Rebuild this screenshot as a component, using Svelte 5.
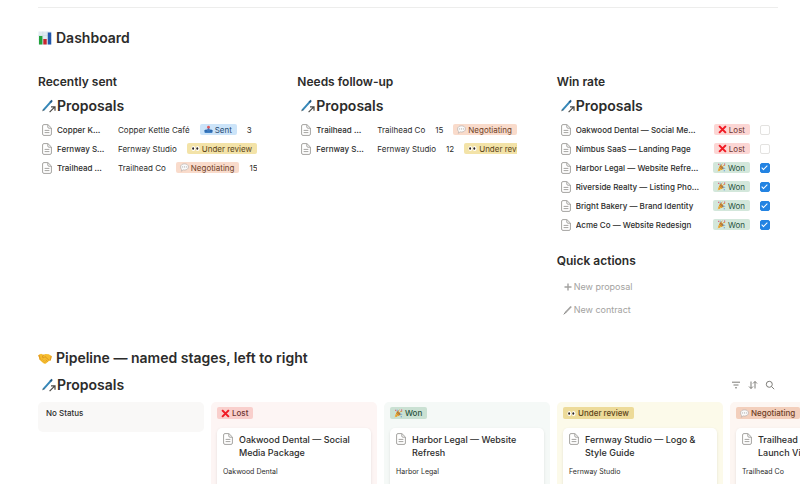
<script lang="ts">
  type Status = {
    label: string,
    icon: string,
    tone: string
  };

  const statuses: Record<string, Status> = {
    sent: { label: "Sent", icon: "tray", tone: "blue" },
    review: { label: "Under review", icon: "eyes", tone: "yellow" },
    negotiating: { label: "Negotiating", icon: "speech", tone: "orange" },
    lost: { label: "Lost", icon: "cross", tone: "red" },
    won: { label: "Won", icon: "party", tone: "green" }
  };

  const recent = [
    { title: "Copper K…", client: "Copper Kettle Café", status: "sent", days: 3 },
    { title: "Fernway S…", client: "Fernway Studio", status: "review", days: null },
    { title: "Trailhead …", client: "Trailhead Co", status: "negotiating", days: 15 }
  ];

  const followUps = [
    { title: "Trailhead …", client: "Trailhead Co", days: 15, status: "negotiating" },
    { title: "Fernway S…", client: "Fernway Studio", days: 12, status: "review" }
  ];

  let results = $state([
    { title: "Oakwood Dental — Social Me…", status: "lost", won: false },
    { title: "Nimbus SaaS — Landing Page", status: "lost", won: false },
    { title: "Harbor Legal — Website Refre…", status: "won", won: true },
    { title: "Riverside Realty — Listing Pho…", status: "won", won: true },
    { title: "Bright Bakery — Brand Identity", status: "won", won: true },
    { title: "Acme Co — Website Redesign", status: "won", won: true }
  ]);

  const lanes = [
    { status: "lost", title: "Oakwood Dental — Social Media Package", client: "Oakwood Dental" },
    { status: "won", title: "Harbor Legal — Website Refresh", client: "Harbor Legal" },
    { status: "review", title: "Fernway Studio — Logo & Style Guide", client: "Fernway Studio" },
    { status: "negotiating", title: "Trailhead Co — Product Launch Video", client: "Trailhead Co" }
  ];
</script>

{#snippet docIcon()}
  <svg class="doc" viewBox="0 0 10 12" aria-hidden="true">
    <path d="M2 .6h3.900L9.400 4v6a1.400 1.400 0 0 1-1.400 1.400H2A1.400 1.400 0 0 1 .6 10V2A1.400 1.400 0 0 1 2 .6z" />
    <path d="M5.800 .8V3a1.200 1.200 0 0 0 1.200 1.200h2.200M2.600 6.400h4.800M2.600 8.600h4.800" />
  </svg>
{/snippet}

{#snippet emoji(name: string)}
  <svg class="emoji" viewBox="0 0 16 16" aria-hidden="true">
    {#if name === "tray"}
      <path d="M1 9.500 3 8h10l2 1.500v3.500a1 1 0 0 1-1 1H2a1 1 0 0 1-1-1z" fill="#3f7fc4" />
      <path d="M1 9.500h4l1 1.500h4l1-1.500h4v2H1z" fill="#2560a5" />
      <path d="M8 10 4.800 6.500H7V4h2v2.500h2.200z" fill="#4a6fb5" />
      <circle cx="8" cy="3.800" r="2.500" fill="#e0595c" />
    {:else if name === "eyes"}
      <ellipse cx="4.200" cy="8" rx="3.400" ry="4.600" fill="#fff" />
      <ellipse cx="11.800" cy="8" rx="3.400" ry="4.600" fill="#fff" />
      <ellipse cx="3.800" cy="8" rx="1.700" ry="2.400" fill="#2b211d" />
      <ellipse cx="11.200" cy="8" rx="1.700" ry="2.400" fill="#2b211d" />
    {:else if name === "speech"}
      <path d="M8 1.500c4 0 7 2.300 7 5.500s-3 5.500-7 5.500c-.8 0-1.500-.1-2.200-.3-.9 1.300-2.200 2-3.800 2.300.7-.9 1-2 .9-3C1.700 10.400 1 8.800 1 7c0-3.200 3-5.500 7-5.500z" fill="#fafafa" stroke="#a9a3a0" stroke-width="1" />
      <path d="M4 7h1.500M7.200 7h1.500M10.500 7H12" stroke="#8e8987" stroke-width="1.500" />
    {:else if name === "cross"}
      <path d="M2 2 14 14M14 2 2 14" stroke="#f01923" stroke-width="3.600" />
    {:else if name === "party"}
      <path d="M1 15 5 4.500l6.500 6z" fill="#f2b53c" />
      <path d="m3.800 7.500 4.700 4.300M2.600 10.800l2.800 2.500" stroke="#c17a25" stroke-width="1.300" />
      <ellipse cx="8.300" cy="7.500" rx="1.800" ry="4.500" transform="rotate(-47 8.300 7.500)" fill="#a8733c" />
      <path d="M8 7.500C7 4 8 2.500 9.500 1.500M9 8c1-3 2.500-4 5.500-3.500" fill="none" stroke="#d98b33" stroke-width="1.400" />
      <path d="M10 9.500c2-1 3.500-.5 4.500 1" fill="none" stroke="#5798d8" stroke-width="1.400" />
      <path d="M2 1.500h2v2H2zM12.500 1h2v2h-2z" fill="#dc5a78" />
      <path d="M5 1.500h1.500V3H5zM12 13h2v1.500h-2z" fill="#5798d8" />
    {/if}
  </svg>
{/snippet}

{#snippet tag(key: string)}
  <span class="tag {statuses[key].tone}">
    {@render emoji(statuses[key].icon)}
    {statuses[key].label}
  </span>
{/snippet}

{#snippet sourceTitle()}
  <h3 class="source">
    <svg viewBox="0 0 14 14" aria-hidden="true">
      <path d="M1.200 11.300 9 2.600" stroke="#3587b8" stroke-width="2" />
      <path d="m8.300 3.400 1.800-2" stroke="#245b86" stroke-width="2" />
      <path d="m.4 12.200 1.500-1.700" stroke="#55585a" stroke-width="1" />
      <path d="m7.600 13.200 5-5M9 7.800h4v4" fill="none" stroke="#4a4946" stroke-width="1.200" />
    </svg>
    <a href="#proposals">Proposals</a>
  </h3>
{/snippet}

<main class="page">
  <hr />

  <h1 class="heading">
    <svg viewBox="0 0 14 14" aria-hidden="true">
      <rect x=".5" y=".5" width="13" height="13" fill="#e0ebf1" />
      <path d="M.5 4.500h13M.5 8.500h13M4.800.5v13M9.200.5v13" stroke="#c8d9e2" stroke-width=".5" />
      <rect x="1" y="5" width="3.400" height="8.500" fill="#22a33a" />
      <rect x="5.300" y="8" width="3.400" height="5.500" fill="#c9252d" />
      <rect x="9.800" y="1.500" width="3.400" height="12" fill="#2257ad" />
    </svg>
    Dashboard
  </h1>

  <div class="columns">
    <section>
      <h2>Recently sent</h2>
      {@render sourceTitle()}
      <ul class="list">
        {#each recent as item}
          <li>
            {@render docIcon()}
            <a class="name" href="#proposals">{item.title}</a>
            <span>{item.client}</span>
            {@render tag(item.status)}
            {#if item.days}<span>{item.days}</span>{/if}
          </li>
        {/each}
      </ul>
    </section>

    <section>
      <h2>Needs follow-up</h2>
      {@render sourceTitle()}
      <ul class="list">
        {#each followUps as item}
          <li>
            {@render docIcon()}
            <a class="name" href="#proposals">{item.title}</a>
            <span>{item.client}</span>
            <span>{item.days}</span>
            {@render tag(item.status)}
          </li>
        {/each}
      </ul>
    </section>

    <section>
      <h2>Win rate</h2>
      {@render sourceTitle()}
      <ul class="list wide">
        {#each results as item}
          <li>
            {@render docIcon()}
            <a class="name" href="#proposals">{item.title}</a>
            {@render tag(item.status)}
            <input type="checkbox" aria-label={item.title} bind:checked={item.won} />
          </li>
        {/each}
      </ul>

      <h2 class="quick">Quick actions</h2>
      <div class="actions">
        <button type="button">
          <svg viewBox="0 0 10 10" aria-hidden="true">
            <path d="M5 1.500v7M1.500 5h7" stroke="#a3a2a0" stroke-width="1.400" />
          </svg>
          New proposal
        </button>
        <button type="button">
          <svg viewBox="0 0 10 10" aria-hidden="true">
            <path d="M2 8 8.200 1.500" stroke="#a3a2a0" stroke-width="1.800" />
            <path d="M.8 9.400 2.400 7.600" stroke="#82817f" stroke-width="1" />
          </svg>
          New contract
        </button>
      </div>
    </section>
  </div>

  <h1 class="heading">
    <svg viewBox="0 0 14 14" aria-hidden="true">
      <path d="M.3 4.200 3 2.700l2.500 1 2-.7 3.300.2 2.900 2-.9 4-1.900.8-2.600 2.300c-1 .8-2.300.6-3.200-.2L1.800 9z" fill="#f6bd2f" />
      <path d="M5.500 3.700 4.300 6.200c.8.8 2 .5 2.700-.6l3.900 3.500" fill="none" stroke="#cf861b" stroke-width=".7" />
      <path d="m3.300 9.300 1.300-1.200M4.800 10.600l1.300-1.300M6.500 11.700l1.100-1.200M7.700 8.800l2 1.900" stroke="#d78f1e" stroke-width=".7" />
      <path d="M.3 4.200 1.800 9l1-.5L1.600 3.500z" fill="#e39b24" />
      <path d="m13.700 5.200-.9 4-1.200.5 1.100-5.200z" fill="#e39b24" />
    </svg>
    Pipeline — named stages, left to right
  </h1>

  <div class="board-bar">
    {@render sourceTitle()}
    <div class="tools">
      <button type="button" aria-label="Filter">
        <svg viewBox="0 0 10 10"><path d="M1 2.200h8M2.500 5h5M4 7.800h2" /></svg>
      </button>
      <button type="button" aria-label="Sort">
        <svg viewBox="0 0 10 10"><path d="M3 1.500v7M1 6.500l2 2 2-2M7 8.500v-7M5 3.500l2-2 2 2" /></svg>
      </button>
      <button type="button" aria-label="Search">
        <svg viewBox="0 0 10 10"><circle cx="4.300" cy="4.300" r="3" /><path d="m6.500 6.500 2.700 2.700" /></svg>
      </button>
    </div>
  </div>

  <div class="board">
    <section class="lane">
      <h4>No Status</h4>
    </section>
    {#each lanes as lane}
      <section class="lane lane-{statuses[lane.status].tone}">
        <header>{@render tag(lane.status)}</header>
        <article class="card">
          <div class="card-title">
            {@render docIcon()}
            <a href="#proposals">{lane.title}</a>
          </div>
          <p>{lane.client}</p>
        </article>
      </section>
    {/each}
  </div>
</main>

<style>
:global(html) {
  scrollbar-width: none;
}

:global(body) {
  margin: 0;
  background: #fff;
}

.page {
  padding: 7px 22px 0 38px;
  font-family: Inter, "Liberation Sans", sans-serif;
  font-size: 8px;
  line-height: 12px;
  color: #2c2c2b;
}

a {
  color: inherit;
  text-decoration: none;
}

h1, h2, h3, h4, p, ul {
  margin: 0;
  padding: 0;
}

hr {
  margin: 0 0 20px;
  border: 0;
  border-top: 1px solid #ededec;
}

.heading {
  display: flex;
  align-items: center;
  gap: 4px;
  font-size: 14px;
  line-height: 20px;
  font-weight: 600;
}

.heading svg {
  width: 14px;
  height: 14px;
}

.columns {
  display: grid;
  grid-template-columns: repeat(3, minmax(0, 1fr));
  gap: 40px;
  padding: 26px 2px 29px 0;
}

h2 {
  font-size: 12px;
  line-height: 16px;
  font-weight: 600;
}

.source {
  display: flex;
  align-items: center;
  gap: 1px;
  padding-left: 4px;
  font-size: 14px;
  line-height: 20px;
  font-weight: 600;
}

.source svg {
  width: 14px;
  height: 14px;
}

.columns .source {
  margin: 6px 0 4px;
}

.list {
  list-style: none;
}

.list li {
  display: flex;
  align-items: center;
  gap: 10px;
  height: 19px;
  padding-left: 4px;
  overflow: hidden;
  white-space: nowrap;
}

.list li > :global(*) {
  flex: none;
}

.doc {
  flex: none;
  width: 10px;
  height: 12px;
  fill: none;
  stroke: #a5a4a1;
  stroke-width: 1;
}

.list .name {
  width: 49px;
  margin: 0 2px 0 -5px;
  overflow: hidden;
  text-overflow: ellipsis;
  font-weight: 500;
}

.wide li {
  padding-right: 6px;
}

.list.wide .name {
  flex: 1;
}

.tag {
  display: inline-flex;
  align-items: center;
  gap: 2px;
  height: 11px;
  padding: 0 5px 0 4px;
  border-radius: 2px;
  white-space: nowrap;
}

.emoji {
  width: 9px;
  height: 9px;
}

.blue { background: #cce4f9; color: #264a72; }
.yellow { background: #f3e3a8; color: #5c4519; }
.orange { background: #f9dbcb; color: #6f3f27; }
.red { background: #fcd6d4; color: #6d3531; }
.green { background: #d3e7db; color: #2a533c; }

input {
  appearance: none;
  width: 10px;
  height: 10px;
  margin: 0;
  border: 1px solid #e3e2e0;
  border-radius: 2px;
  background: #fff;
}

input:checked {
  display: grid;
  place-items: center;
  border-color: #2383e2;
  background: #2383e2;
}

input:checked::before {
  content: "";
  width: 2px;
  height: 5px;
  margin-bottom: 2px;
  border: solid #fff;
  border-width: 0 1px 1px 0;
  transform: rotate(45deg);
}

.quick {
  margin-top: 19px;
}

.actions {
  display: flex;
  flex-direction: column;
  align-items: flex-start;
  gap: 4px;
  margin-top: 8px;
}

button {
  display: flex;
  align-items: center;
  border: 0;
  background: none;
  font: inherit;
  cursor: pointer;
}

.actions button {
  gap: 1px;
  height: 19px;
  padding: 0 6px;
  font-size: 9px;
  color: #a3a2a0;
}

.actions svg {
  width: 10px;
  height: 10px;
}

.board-bar {
  display: flex;
  align-items: center;
  justify-content: space-between;
  margin: 7px 0;
}

.tools {
  display: flex;
  gap: 7px;
  padding-right: 3px;
}

.tools button {
  padding: 0;
}

.tools svg {
  width: 10px;
  height: 10px;
  fill: none;
  stroke: #7d7c78;
  stroke-width: 1;
}

.board {
  display: flex;
  align-items: flex-start;
  gap: 7px;
  margin-right: -22px;
  overflow-x: auto;
  scrollbar-width: none;
}

.lane {
  flex: none;
  box-sizing: border-box;
  width: 166px;
  padding: 5px 6px 8px;
  border-radius: 5px;
  background: #f9f8f7;
}

.lane h4 {
  padding: 0 2px 5px;
  font-size: 8px;
  font-weight: 500;
}

.lane header {
  display: flex;
  height: 21px;
}

.lane .tag {
  height: 12px;
  font-weight: 500;
}

.lane-red { background: #fdf5f4; }
.lane-green { background: #f5f9f7; }
.lane-yellow { background: #fcfaea; }
.lane-orange { background: #fdf6f2; }

.lane .red { background: #f9cfcc; }
.lane .green { background: #cae1d3; }
.lane .yellow { background: #eddb99; }
.lane .orange { background: #f3cfbc; }

.card {
  padding: 5px 6px 40px;
  border-radius: 5px;
  background: #fff;
  box-shadow: 0 1px 3px #0000001a;
}

.card-title {
  display: flex;
  gap: 6px;
  font-size: 9px;
  line-height: 13px;
  font-weight: 500;
}

.card p {
  margin-top: 7px;
  font-size: 7px;
}
</style>
